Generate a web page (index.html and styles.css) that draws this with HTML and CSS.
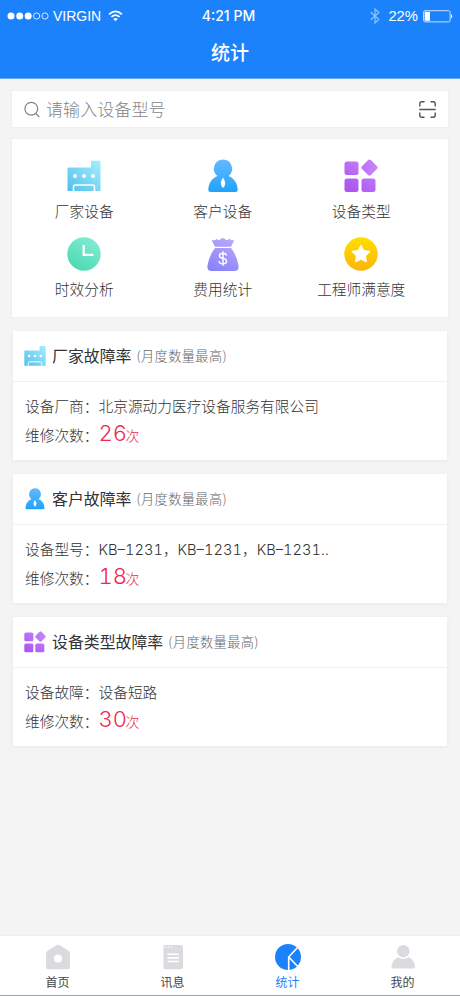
FILE: index.html
```html
<!DOCTYPE html>
<html lang="zh-CN">
<head>
<meta charset="utf-8">
<meta name="viewport" content="width=device-width, initial-scale=1">
<title>统计</title>
<link rel="stylesheet" href="styles.css">
</head>
<body>
<svg class="defs" width="0" height="0" aria-hidden="true">
  <defs>
    <linearGradient id="cyan" x1="1" y1="0" x2="0" y2="1"><stop offset="0" stop-color="#a6effc"/><stop offset="1" stop-color="#52bfec"/></linearGradient>
    <linearGradient id="blue" x1="0" y1="0" x2="0" y2="1"><stop offset="0" stop-color="#64baff"/><stop offset="1" stop-color="#20a2fb"/></linearGradient>
    <linearGradient id="purple" gradientUnits="userSpaceOnUse" x1="30" y1="0" x2="4" y2="34"><stop offset="0" stop-color="#ca88fb"/><stop offset="1" stop-color="#a951f0"/></linearGradient>
    <linearGradient id="green" x1="0.8" y1="0" x2="0.2" y2="1"><stop offset="0" stop-color="#84edd5"/><stop offset="1" stop-color="#48d8b0"/></linearGradient>
    <linearGradient id="violet" gradientUnits="userSpaceOnUse" x1="24" y1="0" x2="8" y2="34"><stop offset="0" stop-color="#b9a9fb"/><stop offset="1" stop-color="#8882fb"/></linearGradient>
    <linearGradient id="gold" x1="0" y1="0" x2="0" y2="1"><stop offset="0" stop-color="#ffdf00"/><stop offset="1" stop-color="#fbb40b"/></linearGradient>
    <symbol id="factory" viewBox="0 0 34 34">
      <path fill="url(#cyan)" d="M.5 9.500q0-1 1-1H24V3q0-1.300 1.300-1.300h7q1.200 0 1.200 1.200V32H.5z"/>
      <path fill="none" stroke="#fff" stroke-width="1.500" d="M6.500 32v-4q0-2 2-2h17q2 0 2 2v4"/>
      <circle cx="8" cy="17" r="2" fill="#fff"/><circle cx="17" cy="17" r="2" fill="#fff"/><circle cx="26" cy="17" r="2" fill="#fff"/>
    </symbol>
    <symbol id="client" viewBox="0 0 34 34">
      <path fill="url(#blue)" d="M17 .5a9.200 9.200 0 0 1 5.600 16.400C28.200 19.300 31.500 24 31.700 31q0 2-2 2H4.300q-2 0-2-2C2.500 24 5.800 19.300 11.400 16.900A9.200 9.200 0 0 1 17 .5z"/>
      <path fill="#fff" d="M17 18.500q4.500 6 0 10.500q-4.500-4.500 0-10.500z"/>
    </symbol>
    <symbol id="types" viewBox="0 0 34 34">
      <g fill="url(#purple)"><rect x=".5" y="2.500" width="14" height="13.500" rx="2.500"/><rect x=".5" y="19.500" width="14" height="13.500" rx="2.500"/><rect x="17.500" y="19.500" width="14" height="13.500" rx="2.500"/><rect x="19.200" y="2.300" width="12.600" height="12.600" rx="2" transform="rotate(45 25.500 8.600)"/></g>
    </symbol>
  </defs>
</svg>

<header class="header">
  <div class="status">
    <div class="status-left">
      <svg class="dots" viewBox="0 0 42 8"><g fill="#fff"><circle cx="4" cy="4" r="3.500"/><circle cx="12.700" cy="4" r="3.500"/><circle cx="21.200" cy="4" r="3.500"/></g><g fill="none" stroke="#fff" stroke-width=".8"><circle cx="29.600" cy="4" r="3.100"/><circle cx="38" cy="4" r="3.100"/></g></svg>
      <span class="carrier">VIRGIN</span>
      <svg class="wifi" viewBox="0 0 15 12"><g fill="none" stroke="#fff" stroke-width="1.700"><path d="M1 4.300Q7.500-1.600 14 4.300"/><path d="M3.400 6.900Q7.500 3.200 11.600 6.900"/></g><path fill="#fff" d="M5.200 8.900Q7.500 7 9.800 8.900L7.500 11.300z"/></svg>
    </div>
    <span class="clock">4:21 PM</span>
    <div class="status-right">
      <svg class="bluetooth" viewBox="0 0 10 16"><path fill="none" stroke="#8fc2ff" stroke-width="1.200" d="M.8 4.200 8.800 11.500 5 15V1l3.800 3.500-8 7.300"/></svg>
      <span class="percent">22%</span>
      <svg class="battery" viewBox="0 0 30 13"><rect x=".6" y=".7" width="26.500" height="11.200" rx="1.500" fill="none" stroke="#c9e1ff"/><rect x="1.700" y="1.800" width="5.300" height="9" fill="#fff"/><path fill="#fff" d="M28 4q2.300 2.300 0 4.600z"/></svg>
    </div>
  </div>
  <h1 class="title">统计</h1>
</header>

<main class="content">
  <div class="search">
    <svg class="search-icon" viewBox="0 0 17 17"><g fill="none" stroke="#858585" stroke-width="1.200"><circle cx="7.300" cy="7.700" r="6.400"/><path d="m11.800 12.300 3.500 3.700"/></g></svg>
    <span class="placeholder">请输入设备型号</span>
    <svg class="scan" viewBox="0 0 17 17"><path fill="none" stroke="#555" stroke-width="1.400" d="M.8 5.500V2.800q0-2 2-2h2.700M11.500.8h2.700q2 0 2 2v2.700M.8 11.500v2.700q0 2 2 2h2.700M11.500 16.200h2.700q2 0 2-2v-2.700M.3 8.500h16.400"/></svg>
  </div>

  <nav class="grid">
    <a class="cell"><svg class="cell-icon"><use href="#factory"/></svg><span>厂家设备</span></a>
    <a class="cell"><svg class="cell-icon"><use href="#client"/></svg><span>客户设备</span></a>
    <a class="cell"><svg class="cell-icon"><use href="#types"/></svg><span>设备类型</span></a>
    <a class="cell"><svg class="cell-icon" viewBox="0 0 34 34"><circle cx="17" cy="17" r="16.700" fill="url(#green)"/><path fill="none" stroke="#fff" stroke-width="2.300" d="M16.700 8v9.800h9.800"/></svg><span>时效分析</span></a>
    <a class="cell"><svg class="cell-icon" viewBox="0 0 34 34"><path fill="url(#violet)" d="M6.500 3q2.500 1 4-1.300Q12 4 14 2.500Q17-.5 19.500 2.500Q22 4 23.500 1.600Q25 4 27.500 3q.8 0 .4 1L25 9.800H9L6 4q-.3-1 .5-1zM9 11h16q5.500 7 7.300 16.500Q33.700 34 28.500 34h-23Q.3 34 1.700 27.500Q3.500 18 9 11z"/><path fill="none" stroke="#fff" stroke-width="1.400" d="M20.600 18.500q-.6-2.300-3.600-2.300c-4.700 0-4.600 4.400-.5 5 5.700.8 5 5.700.5 5.700-3 0-3.900-1.300-4.100-2.900M17 14.200v14.600"/></svg><span>费用统计</span></a>
    <a class="cell"><svg class="cell-icon" viewBox="0 0 34 34"><circle cx="17" cy="17" r="16.700" fill="url(#gold)"/><path fill="#fff" stroke="#fff" stroke-width="1.500" stroke-linejoin="round" d="m17 8.500 2.600 5.300 5.900.8-4.300 4.100 1 5.800-5.200-2.700-5.200 2.700 1-5.800-4.300-4.100 5.900-.8z"/></svg><span>工程师满意度</span></a>
  </nav>

  <section class="card">
    <h2 class="card-head"><svg class="card-icon"><use href="#factory"/></svg><span class="name">厂家故障率</span><span class="note">(月度数量最高)</span></h2>
    <div class="card-body">
      <p class="row"><span class="label">设备厂商：</span><span>北京源动力医疗设备服务有限公司</span></p>
      <p class="row"><span class="label">维修次数：</span><span class="count">26</span><span class="unit">次</span></p>
    </div>
  </section>
  <section class="card">
    <h2 class="card-head"><svg class="card-icon"><use href="#client"/></svg><span class="name">客户故障率</span><span class="note">(月度数量最高)</span></h2>
    <div class="card-body">
      <p class="row"><span class="label">设备型号：</span><span class="models">KB–1231，KB–1231，KB–1231..</span></p>
      <p class="row"><span class="label">维修次数：</span><span class="count">18</span><span class="unit">次</span></p>
    </div>
  </section>
  <section class="card">
    <h2 class="card-head"><svg class="card-icon"><use href="#types"/></svg><span class="name">设备类型故障率</span><span class="note">(月度数量最高)</span></h2>
    <div class="card-body">
      <p class="row"><span class="label">设备故障：</span><span>设备短路</span></p>
      <p class="row"><span class="label">维修次数：</span><span class="count">30</span><span class="unit">次</span></p>
    </div>
  </section>
</main>

<nav class="tabs">
  <a class="tab"><svg class="tab-icon" viewBox="0 0 26 26"><path fill="#d9dbde" d="M11 1.500q2-1.300 4 0l8.500 5.300q1.500 1 1.500 2.700V23q0 2.300-2.300 2.300H3.300Q1 25.300 1 23V9.500q0-1.700 1.500-2.700z"/><circle cx="13" cy="14.500" r="4" fill="#fff"/></svg><span>首页</span></a>
  <a class="tab"><svg class="tab-icon" viewBox="0 0 26 26"><path fill="#d9dbde" d="M3.500 1H21q2 0 2 2v20.300q0 2-2 2H5.500q-2 0-2-2z"/><path fill="none" stroke="#fff" stroke-width="1.600" d="M7.500 10.300h11.500M7.500 13.900h11.500M7.500 17.500h11.500"/><path stroke="#fff" stroke-width="1.200" stroke-dasharray="1.500 1.500" d="M4.500 3.200h9"/></svg><span>讯息</span></a>
  <a class="tab active"><svg class="tab-icon" viewBox="0 0 26 26"><circle cx="13" cy="13" r="13" fill="#1b82fb"/><path fill="none" stroke="#fff" stroke-width="1.600" d="M22.500 3.500 13.700 13v13M13.700 13l8.800 9.300"/></svg><span>统计</span></a>
  <a class="tab"><svg class="tab-icon" viewBox="0 0 26 26"><circle cx="13.300" cy="7.200" r="6.200" fill="#d9dbde"/><path fill="#d9dbde" d="M8 13.300q5.300 3 10.600 0Q24 15.500 25.200 22.500q.2 2-1.800 2H3.200q-2 0-1.800-2Q2.600 15.500 8 13.300z"/></svg><span>我的</span></a>
</nav>
</body>
</html>
```

FILE: styles.css
```css
* { box-sizing: border-box; }

body {
  margin: 0;
  width: 460px;
  height: 996px;
  display: flex;
  flex-direction: column;
  overflow: hidden;
  background: #f4f4f5;
  color: #333;
  font-family: "Liberation Sans", "Noto Sans CJK SC", sans-serif;
}

h1, h2, p { margin: 0; font-weight: 400; }
svg { display: block; flex: none; }
.defs { position: absolute; }

.header {
  height: 79px;
  background: #1b82fb;
  border-bottom: 1px solid #65aafa;
  color: #fff;
}

.status {
  display: grid;
  grid-template-columns: 1fr auto 1fr;
  align-items: center;
  height: 32px;
  padding: 0 7px;
  font: 14px/32px "Liberation Sans", sans-serif;
}
.status-left, .status-right { display: flex; align-items: center; }
.status-right { justify-content: flex-end; }
.dots { width: 42px; height: 8px; }
.carrier { margin-left: 4px; font-size: 14px; }
.wifi { width: 15px; height: 12px; margin-left: 7px; }
.clock { margin-right: 3px; font: 500 14px/32px "Inter", sans-serif; }
.bluetooth { width: 10px; height: 16px; }
.percent { margin: 0 5px 0 8px; font-size: 14.800px; }
.battery { width: 30px; height: 13px; }

.title {
  font: 500 19px/39px "Noto Sans CJK SC", sans-serif;
  text-align: center;
}

.content { flex: 1; padding: 12px 12px 0; }

.search {
  display: flex;
  align-items: center;
  height: 36px;
  padding: 0 12px;
  background: #fff;
  box-shadow: 0 0 2px #e9e9e9;
}
.search-icon { width: 17px; height: 17px; }
.placeholder {
  flex: 1;
  margin-left: 5px;
  color: #858585;
  font: 300 17.100px/34px "Noto Sans CJK SC", sans-serif;
}
.scan { width: 17px; height: 17px; }

.grid {
  display: grid;
  grid-template-columns: repeat(3, 138.500px);
  grid-auto-rows: 77.500px;
  height: 178px;
  margin-top: 12px;
  padding: 20px 0 0 3px;
  background: #fff;
  box-shadow: 0 0 2px #e9e9e9;
}
.cell {
  display: flex;
  flex-direction: column;
  align-items: center;
  font: 300 14.700px/22px "Noto Sans CJK SC", sans-serif;
}
.cell-icon { width: 34px; height: 34px; margin-bottom: 7px; }

.card {
  height: 129px;
  margin: 14px 1px 0;
  background: #fff;
  box-shadow: 0 1px 4px #e8e8e8;
}
.card-head {
  display: flex;
  align-items: center;
  height: 51px;
  padding-left: 11px;
  border-bottom: 1px solid #f1f1f1;
  font-family: "Noto Sans CJK SC", sans-serif;
}
.card-icon { width: 22px; height: 22px; }
.name, .note { padding-bottom: 2px; }
.name { margin-left: 6px; color: #333; font-size: 15.900px; }
.note { margin-left: 5px; color: #666; font-size: 13.200px; font-weight: 300; letter-spacing: .4px; }

.card-body { padding: 9px 12px 0; }
.row {
  display: flex;
  align-items: baseline;
  height: 28px;
  font: 300 14.700px/30px "Noto Sans CJK SC", sans-serif;
}
.label { width: 73.500px; }
.models { font-family: "Inter", "Noto Sans CJK SC", sans-serif; font-variant-numeric: tabular-nums; }
.count, .unit { color: #ef2853; }
.count { width: 27px; font: 300 22px/28px "Inter", sans-serif; font-variant-numeric: tabular-nums; }
.unit { font-size: 14px; }

.tabs {
  display: grid;
  grid-template-columns: repeat(4, 1fr);
  height: 61px;
  padding-top: 8px;
  background: #fff;
  border-top: 1px solid #eee;
  border-bottom: 1px solid #a3a4aa;
}
.tab {
  display: flex;
  flex-direction: column;
  align-items: center;
  color: #444;
  font: 12px/16px "Noto Sans CJK SC", sans-serif;
}
.tab-icon { width: 26px; height: 26px; margin-bottom: 4px; }
.active { color: #1b82fb; }
```
